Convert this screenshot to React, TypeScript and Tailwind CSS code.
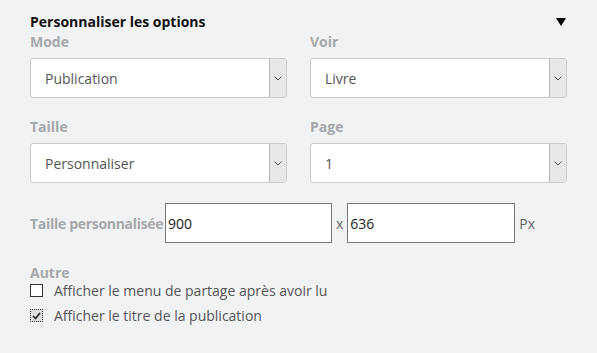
import React from 'react';

const font = { fontFamily: '"Open Sans", Arial, sans-serif' };

const Select: React.FC<{ value: string }> = ({ value }) => (
  <div className="flex h-[40px] bg-white border border-[#c9cbce] rounded-[3px] overflow-hidden">
    <div className="flex-1 flex items-center pl-[14px] text-[14px] text-[#555]">{value}</div>
    <div className="w-[17px] flex items-center justify-center bg-[#e6e7e8] border-l border-[#b5b7ba]">
      <svg width="8" height="5" viewBox="0 0 8 5">
        <path d="M0.5 0.5 L4 4 L7.5 0.5" fill="none" stroke="#555" strokeWidth="1" />
      </svg>
    </div>
  </div>
);

const Field: React.FC<{ label: string; value: string }> = ({ label, value }) => (
  <div>
    <div className="text-[14px] font-bold text-[#a5a8ab] leading-[20px] mb-[6px]">{label}</div>
    <Select value={value} />
  </div>
);

export default function App() {
  return (
    <div style={font} className="w-[597px] h-[353px] bg-[#f1f2f4] px-[30px] pt-[12px]">
      <div className="flex items-center justify-between">
        <h2 className="text-[14px] font-bold text-[#111] leading-[20px]">Personnaliser les options</h2>
        <svg width="10" height="8" viewBox="0 0 10 8" className="mr-[1px]">
          <path d="M0 0 H10 L5 8 Z" fill="#000" />
        </svg>
      </div>

      <div className="grid grid-cols-2 gap-x-[23px] gap-y-[19px]">
        <Field label="Mode" value="Publication" />
        <Field label="Voir" value="Livre" />
        <Field label="Taille" value="Personnaliser" />
        <Field label="Page" value="1" />
      </div>

      <div className="flex items-center mt-[20px] text-[14px]">
        <span className="font-bold text-[#a5a8ab] w-[135px] whitespace-nowrap tracking-[-0.3px]">Taille personnalisée</span>
        <div className="w-[167px] h-[40px] bg-white border border-[#777] flex items-center pl-[2px] text-[#222]">900</div>
        <span className="text-[#666] mx-[4px]">x</span>
        <div className="w-[168px] h-[40px] bg-white border border-[#777] flex items-center pl-[2px] text-[#222]">636</div>
        <span className="text-[#666] ml-[4px]">Px</span>
      </div>

      <div className="mt-[20px] text-[14px] font-bold text-[#a5a8ab] leading-[20px]">Autre</div>
      <div className="mt-[1px] flex flex-col gap-[12px] text-[14px] text-[#555]">
        <label className="flex items-center gap-[11px] leading-[13px]">
          <span className="w-[13px] h-[13px] border border-[#333] bg-white" />
          Afficher le menu de partage après avoir lu
        </label>
        <label className="flex items-center gap-[11px] leading-[13px]">
          <span className="w-[13px] h-[13px] border border-dotted border-[#333] bg-[#ddd] flex items-center justify-center">
            <svg width="9" height="8" viewBox="0 0 9 8">
              <path d="M1 4 L3.5 6.5 L8 1" fill="none" stroke="#222" strokeWidth="1.6" />
            </svg>
          </span>
          Afficher le titre de la publication
        </label>
      </div>
    </div>
  );
}
